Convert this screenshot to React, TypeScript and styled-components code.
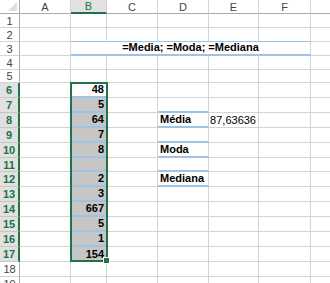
import styled, { createGlobalStyle } from "styled-components";

const GlobalStyle = createGlobalStyle`
  html, body {
    margin: 0;
    padding: 0;
    background: #ffffff;
    overflow: hidden;
  }
  body {
    font-family: "Liberation Sans", Arial, sans-serif;
  }
`;

const GREEN = "#217346";
const GRID = "#d4d4d4";
const BLUE = "#9dc3e6";

// G is only partly on screen, its letter lies past the right edge
const COLS = ["A", "B", "C", "D", "E", "F", ""];
const ROW_HEIGHTS = [14, 14, 14, 14, 13, 15, 15, 15, 15, 15, 14, 15, 15, 15, 15, 15, 15, 15, 15];
const SELECTED_FIRST = 6;
const SELECTED_LAST = 17;

type Value = { text: string; bold?: boolean; align?: "left" | "right" | "center" };

const values: Record<string, Value> = {
  B6: { text: "48", bold: true, align: "right" },
  B7: { text: "5", bold: true, align: "right" },
  B8: { text: "64", bold: true, align: "right" },
  B9: { text: "7", bold: true, align: "right" },
  B10: { text: "8", bold: true, align: "right" },
  B12: { text: "2", bold: true, align: "right" },
  B13: { text: "3", bold: true, align: "right" },
  B14: { text: "667", bold: true, align: "right" },
  B15: { text: "5", bold: true, align: "right" },
  B16: { text: "1", bold: true, align: "right" },
  B17: { text: "154", bold: true, align: "right" },
  D8: { text: "Média", bold: true },
  D10: { text: "Moda", bold: true },
  D12: { text: "Mediana", bold: true },
  E8: { text: "87,63636", align: "right" },
};

// cells whose bottom edge carries the blue heading border
const thinBlue = new Set(["B2", "C2", "D2", "E2", "F2"]);
const thickBlue = new Set([
  "B6", "B7", "B8", "B9", "B10", "B11", "B12", "B13", "B14", "B15", "B16",
  "D7", "D8", "D9", "D10", "D11", "D12",
]);

const Viewport = styled.div`
  width: 330px;
  height: 283px;
  overflow: hidden;
`;

const Sheet = styled.div`
  display: grid;
  grid-template-columns: 20px 51px 36px 51px 51px 50px 52px 51px;
  grid-template-rows: 14px ${ROW_HEIGHTS.map((h) => `${h}px`).join(" ")};
  width: max-content;
  font-size: 11px;
  color: #000;
`;

const Corner = styled.div`
  grid-row: 1;
  grid-column: 1;
  display: flex;
  align-items: flex-end;
  justify-content: flex-end;
  padding: 0 2px 2px 0;
  border-right: 1px solid #ababab;
  border-bottom: 1px solid #ababab;
  box-sizing: border-box;
  background: #fff;
`;

const ColHeader = styled.div<{ $c: number; $active?: boolean }>`
  grid-row: 1;
  grid-column: ${(p) => p.$c};
  display: flex;
  align-items: center;
  justify-content: center;
  box-sizing: border-box;
  background: ${(p) => (p.$active ? "#e1e1e1" : "#ffffff")};
  color: ${(p) => (p.$active ? GREEN : "#444")};
  border-right: 1px solid ${GRID};
  border-bottom: ${(p) => (p.$active ? `2px solid ${GREEN}` : "1px solid #ababab")};
  font-size: 11px;
`;

const RowHeader = styled.div<{ $r: number; $active?: boolean }>`
  grid-row: ${(p) => p.$r};
  grid-column: 1;
  display: flex;
  align-items: center;
  justify-content: center;
  box-sizing: border-box;
  background: ${(p) => (p.$active ? "#e1e1e1" : "#ffffff")};
  color: ${(p) => (p.$active ? GREEN : "#444")};
  font-weight: ${(p) => (p.$active ? "bold" : "normal")};
  border-bottom: 1px solid ${(p) => (p.$active ? "#c6c6c6" : GRID)};
  border-right: ${(p) => (p.$active ? `2px solid ${GREEN}` : "1px solid #ababab")};
  font-size: 11px;
`;

const Cell = styled.div<{
  $r: number;
  $c: number;
  $span?: number;
  $shade?: boolean;
  $line?: "thin" | "thick";
  $bold?: boolean;
  $align?: "left" | "right" | "center";
}>`
  grid-row: ${(p) => p.$r};
  grid-column: ${(p) => `${p.$c} / span ${p.$span ?? 1}`};
  display: flex;
  align-items: flex-end;
  justify-content: ${(p) =>
    p.$align === "right" ? "flex-end" : p.$align === "center" ? "center" : "flex-start"};
  box-sizing: border-box;
  padding: 0 2px 1px 2px;
  background: ${(p) => (p.$shade ? "#c6c6c6" : "#ffffff")};
  border-right: 1px solid ${GRID};
  border-bottom: ${(p) =>
    p.$line === "thick"
      ? `2px solid ${BLUE}`
      : p.$line === "thin"
      ? `1px solid ${BLUE}`
      : `1px solid ${GRID}`};
  font-weight: ${(p) => (p.$bold ? "bold" : "normal")};
  white-space: nowrap;
  overflow: visible;
  line-height: 12px;
`;

const Selection = styled.div`
  grid-row: ${SELECTED_FIRST + 1} / ${SELECTED_LAST + 2};
  grid-column: 3;
  margin: -1px -1px 0 -1px;
  border: 2px solid ${GREEN};
  box-sizing: border-box;
  position: relative;
  z-index: 2;
  pointer-events: none;
`;

const FillHandle = styled.span`
  position: absolute;
  right: -4px;
  bottom: -4px;
  width: 5px;
  height: 5px;
  background: ${GREEN};
  border: 1px solid #fff;
`;

function CornerMark() {
  return (
    <svg width="9" height="9" viewBox="0 0 9 9">
      <polygon points="9,0 9,9 0,9" fill="#dfdfdf" />
    </svg>
  );
}

function App() {
  const rows = ROW_HEIGHTS.map((_, i) => i + 1);

  return (
    <>
      <GlobalStyle />
      <Viewport>
        <Sheet>
          <Corner>
            <CornerMark />
          </Corner>
          {COLS.map((col, i) => (
            <ColHeader key={`c${i}`} $c={i + 2} $active={col === "B"}>
              {col}
            </ColHeader>
          ))}

          {rows.map((row) => {
            const gridRow = row + 1;
            const selectedRow = row >= SELECTED_FIRST && row <= SELECTED_LAST;
            const cells = [];

            for (let i = 0; i < COLS.length; i++) {
              const col = COLS[i] || "G";
              const ref = `${col}${row}`;

              if (row === 3 && col === "B") {
                cells.push(
                  <Cell key={ref} $r={gridRow} $c={3} $span={5} $line="thick" $bold $align="center">
                    =Media; =Moda; =Mediana
                  </Cell>
                );
                i += 4;
                continue;
              }

              const v = values[ref];
              cells.push(
                <Cell
                  key={ref}
                  $r={gridRow}
                  $c={i + 2}
                  $shade={col === "B" && selectedRow && row !== SELECTED_FIRST}
                  $line={thickBlue.has(ref) ? "thick" : thinBlue.has(ref) ? "thin" : undefined}
                  $bold={v?.bold}
                  $align={v?.align}
                >
                  {v?.text}
                </Cell>
              );
            }

            return [
              <RowHeader key={`h${row}`} $r={gridRow} $active={selectedRow}>
                {row}
              </RowHeader>,
              ...cells,
            ];
          })}

          <Selection>
            <FillHandle />
          </Selection>
        </Sheet>
      </Viewport>
    </>
  );
}

export default App;
